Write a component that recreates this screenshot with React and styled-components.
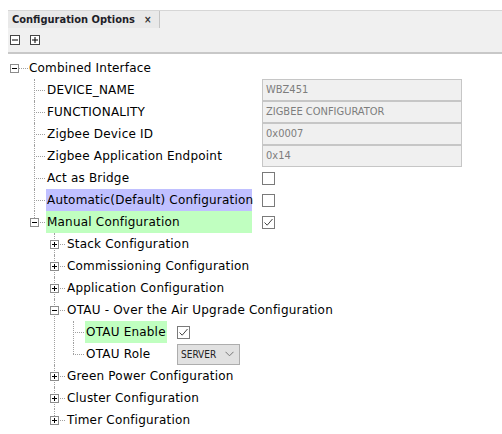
import React from "react";
import styled, { createGlobalStyle } from "styled-components";

const GlobalStyle = createGlobalStyle`
  body {
    margin: 0;
    background: #fff;
    font-family: "DejaVu Sans", Verdana, sans-serif;
    font-size: 12px;
    letter-spacing: 0.2px;
    color: #000;
  }
`;

const Panel = styled.div`
  padding-top: 10px;
`;

const TabStrip = styled.div`
  margin-left: 8px;
  height: 17px;
  display: flex;
  background: #f0f0f0;
  border-top: 1px solid #d6d6d6;
`;

const Tab = styled.div`
  display: flex;
  align-items: center;
  gap: 9px;
  padding: 0 8px 0 4px;
  background: #e9e9e9;
  border-right: 1px solid #c4c4c4;
  font-family: "DejaVu Sans Condensed", "DejaVu Sans", sans-serif;
  font-weight: bold;
  font-size: 11px;
  letter-spacing: 0;
  color: #1e1e28;
`;

const Close = styled.span`
  font-size: 10px;
  color: #333;
`;

const Toolbar = styled.div`
  margin-left: 8px;
  height: 24px;
  display: flex;
  align-items: center;
  gap: 10px;
  padding-left: 2px;
  background: #f0f0f0;
  border-bottom: 2px solid #c8c8c8;
`;

const ToolButton = styled.div`
  width: 10px;
  height: 10px;
  display: flex;
`;

const TreeArea = styled.div`
  padding-top: 3px;
`;

const RootRow = styled.div`
  display: flex;
  align-items: center;
  height: 22px;
  padding-left: 10px;
`;

const RootTick = styled.div`
  width: 9px;
  height: 1px;
  background: repeating-linear-gradient(to right, #a0a0a0 0 1px, transparent 1px 2px);
`;

const Children = styled.div`
  margin-left: ${(p) => p.$indent}px;
`;

const Item = styled.div`
  border-left: 1px dotted ${(p) => (p.$last ? "transparent" : "#a0a0a0")};
`;

const Row = styled.div`
  display: flex;
  align-items: center;
  height: 22px;
`;

const Connector = styled.div`
  width: 12px;
  height: 22px;
  margin-left: -1px;
  flex-shrink: 0;
  display: flex;
  align-items: center;
  background:
    repeating-linear-gradient(to right, #a0a0a0 0 1px, transparent 1px 2px) 0 11px / 12px 1px no-repeat,
    ${(p) =>
      p.$last
        ? "repeating-linear-gradient(to bottom, #a0a0a0 0 1px, transparent 1px 2px) 0 0 / 1px 11px no-repeat"
        : "none"};
`;

const BoxWrap = styled.div`
  margin-left: -4px;
  width: 9px;
  height: 9px;
  display: flex;
  background: #fff;
`;

const Label = styled.div`
  height: 22px;
  line-height: 22px;
  white-space: nowrap;
  padding-left: 1px;
  width: ${(p) => (p.$width ? `${p.$width}px` : "auto")};
  box-sizing: border-box;
  background: ${(p) =>
    p.$tone === "blue" ? "#c0c0ff" : p.$tone === "green" ? "#c0ffc0" : "transparent"};
`;

const Value = styled.div`
  margin-left: 10px;
  display: flex;
  align-items: center;
`;

const Field = styled.div`
  width: 200px;
  height: 22px;
  box-sizing: border-box;
  border: 1px solid #c6c6c6;
  background: #f0f0f0;
  color: #7d7d7d;
  font-family: "DejaVu Sans Condensed", "DejaVu Sans", sans-serif;
  font-size: 11px;
  letter-spacing: 0;
  line-height: 20px;
  padding-left: 3px;
`;

const Check = styled.div`
  width: 13px;
  height: 13px;
  box-sizing: border-box;
  border: 1px solid #7a7a7a;
  background: #fff;
  display: flex;
`;

const Select = styled.div`
  width: 63px;
  height: 21px;
  box-sizing: border-box;
  border: 1px solid #adadad;
  background: #e1e1e1;
  display: flex;
  align-items: center;
  justify-content: space-between;
  padding: 0 5px 0 3px;
  font-family: "DejaVu Sans Condensed", "DejaVu Sans", sans-serif;
  font-size: 10px;
  letter-spacing: 0;
  color: #222;
`;

const SquareIcon = ({ open, size = 9, stroke = "#8c8c8c" }) => (
  <svg width={size} height={size} viewBox={`0 0 ${size} ${size}`}>
    <rect x="0.5" y="0.5" width={size - 1} height={size - 1} fill="#fff" stroke={stroke} />
    <line x1="2" y1={size / 2} x2={size - 2} y2={size / 2} stroke="#000" />
    {!open && <line x1={size / 2} y1="2" x2={size / 2} y2={size - 2} stroke="#000" />}
  </svg>
);

const CheckMark = () => (
  <svg width="11" height="11" viewBox="0 0 11 11">
    <polyline points="1.5,5.5 4.2,8.2 9.5,2" fill="none" stroke="#444" strokeWidth="1" />
  </svg>
);

const Chevron = () => (
  <svg width="9" height="6" viewBox="0 0 9 6">
    <polyline points="0.5,0.8 4.5,4.8 8.5,0.8" fill="none" stroke="#777" strokeWidth="1" />
  </svg>
);

const renderValue = (value) => {
  if (!value) return null;
  if (value.type === "field") return <Field>{value.text}</Field>;
  if (value.type === "check")
    return <Check>{value.checked && <CheckMark />}</Check>;
  if (value.type === "select")
    return (
      <Select>
        {value.text}
        <Chevron />
      </Select>
    );
  return null;
};

const Node = ({ node, last, labelWidth }) => {
  const expandable = !!node.children || node.closed;
  return (
    <Item $last={last}>
      <Row>
        <Connector $last={last}>
          {expandable && (
            <BoxWrap>
              <SquareIcon open={!!node.children} />
            </BoxWrap>
          )}
        </Connector>
        <Label $width={labelWidth} $tone={node.tone}>
          {node.label}
        </Label>
        {node.value && <Value>{renderValue(node.value)}</Value>}
      </Row>
      {node.children && (
        <Children $indent={node.indent}>
          {node.children.map((c, i) => (
            <Node
              key={c.label}
              node={c}
              last={i === node.children.length - 1}
              labelWidth={node.labelWidth}
            />
          ))}
        </Children>
      )}
    </Item>
  );
};

const tree = {
  label: "Combined Interface",
  labelWidth: 206,
  children: [
    { label: "DEVICE_NAME", value: { type: "field", text: "WBZ451" } },
    { label: "FUNCTIONALITY", value: { type: "field", text: "ZIGBEE CONFIGURATOR" } },
    { label: "Zigbee Device ID", value: { type: "field", text: "0x0007" } },
    { label: "Zigbee Application Endpoint", value: { type: "field", text: "0x14" } },
    { label: "Act as Bridge", value: { type: "check", checked: false } },
    {
      label: "Automatic(Default) Configuration",
      tone: "blue",
      value: { type: "check", checked: false },
    },
    {
      label: "Manual Configuration",
      tone: "green",
      value: { type: "check", checked: true },
      indent: 19,
      children: [
        { label: "Stack Configuration", closed: true },
        { label: "Commissioning Configuration", closed: true },
        { label: "Application Configuration", closed: true },
        {
          label: "OTAU - Over the Air Upgrade Configuration",
          indent: 18,
          labelWidth: 82,
          children: [
            { label: "OTAU Enable", tone: "green", value: { type: "check", checked: true } },
            { label: "OTAU Role", value: { type: "select", text: "SERVER" } },
          ],
        },
        { label: "Green Power Configuration", closed: true },
        { label: "Cluster Configuration", closed: true },
        { label: "Timer Configuration", closed: true },
      ],
    },
  ],
};

const App = () => {
  return (
    <>
      <GlobalStyle />
      <Panel>
        <TabStrip>
          <Tab>
            Configuration Options
            <Close>×</Close>
          </Tab>
        </TabStrip>
        <Toolbar>
          <ToolButton>
            <SquareIcon open size={10} stroke="#444" />
          </ToolButton>
          <ToolButton>
            <SquareIcon size={10} stroke="#444" />
          </ToolButton>
        </Toolbar>
      </Panel>
      <TreeArea>
        <RootRow>
          <SquareIcon open />
          <RootTick />
          <Label>{tree.label}</Label>
        </RootRow>
        <Children $indent={34}>
          {tree.children.map((c, i) => (
            <Node
              key={c.label}
              node={c}
              last={i === tree.children.length - 1}
              labelWidth={tree.labelWidth}
            />
          ))}
        </Children>
      </TreeArea>
    </>
  );
};

export default App;
